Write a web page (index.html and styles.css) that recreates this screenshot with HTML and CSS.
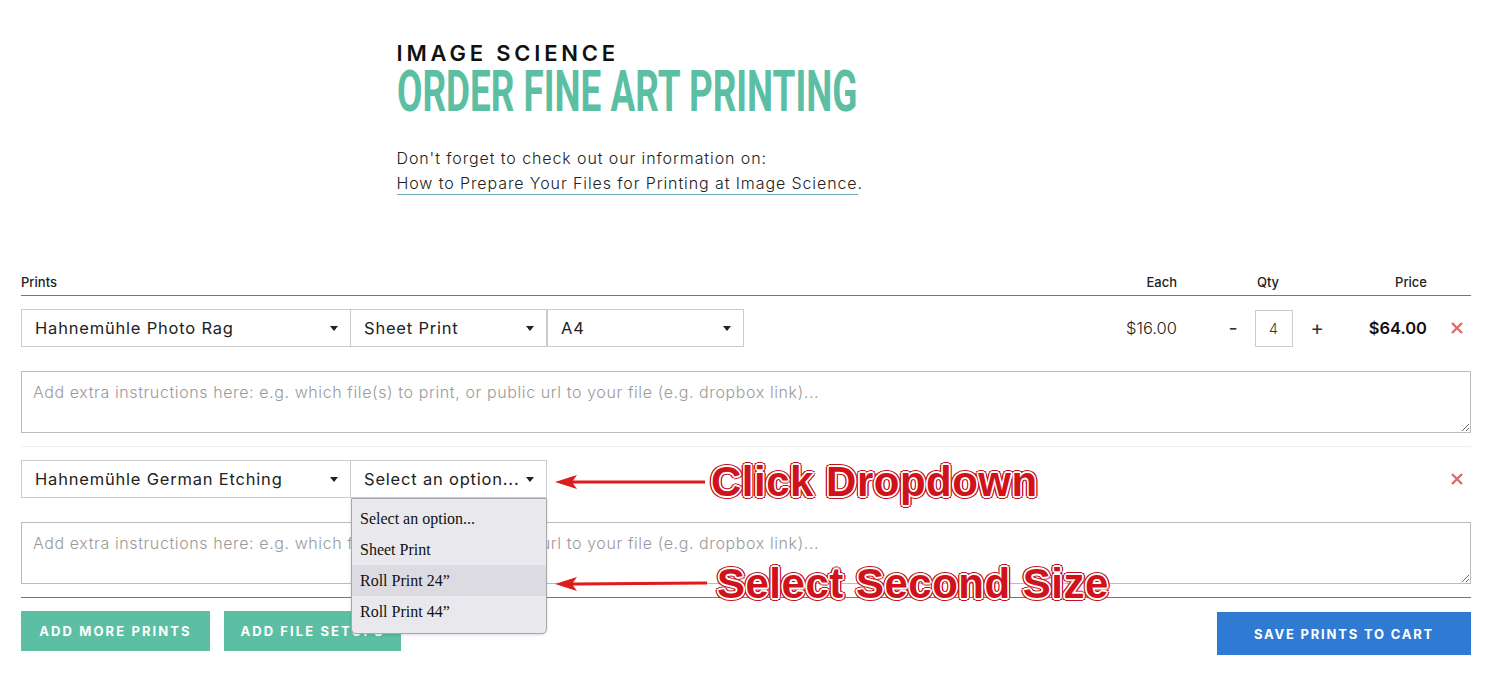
FILE: index.html
```html
<!DOCTYPE html>
<html lang="en">
<head>
<meta charset="utf-8">
<title>Order Fine Art Printing — Image Science</title>
<link rel="stylesheet" href="styles.css">
</head>
<body>
<header class="intro">
  <div class="brand">IMAGE SCIENCE</div>
  <h1 class="title"><span>ORDER FINE ART PRINTING</span></h1>
  <p class="note">Don't forget to check out our information on:<br>
    <a href="#" class="note-link">How to Prepare Your Files for Printing at Image Science</a>.</p>
</header>

<main class="order">
  <div class="grid head">
    <div>Prints</div>
    <div class="h-right">Each</div>
    <div class="h-qty">Qty</div>
    <div class="h-right">Price</div>
    <div></div>
  </div>

  <section class="item">
    <div class="grid">
      <div class="selects">
        <div class="select w-paper">Hahnemühle Photo Rag</div>
        <div class="select w-type">Sheet Print</div>
        <div class="select w-size">A4</div>
      </div>
      <div class="each">$16.00</div>
      <div class="qty">
        <span class="qty-btn">-</span>
        <span class="qty-box">4</span>
        <span class="qty-btn">+</span>
      </div>
      <div class="total">$64.00</div>
      <div class="col-remove">
        <svg class="remove" width="12" height="12" viewBox="0 0 12 12"><path d="M1 1 L11 11 M11 1 L1 11" stroke="#e06a6a" stroke-width="2.4" fill="none"/></svg>
      </div>
    </div>
    <textarea class="notes" placeholder="Add extra instructions here: e.g. which file(s) to print, or public url to your file (e.g. dropbox link)..."></textarea>
  </section>

  <section class="item last">
    <div class="grid">
      <div class="selects">
        <div class="select w-paper">Hahnemühle German Etching</div>
        <div class="select w-type open">Select an option...
          <ul class="menu">
            <li>Select an option...</li>
            <li>Sheet Print</li>
            <li class="hover">Roll Print 24”</li>
            <li>Roll Print 44”</li>
          </ul>
        </div>
      </div>
      <div></div>
      <div></div>
      <div></div>
      <div class="col-remove">
        <svg class="remove" width="12" height="12" viewBox="0 0 12 12"><path d="M1 1 L11 11 M11 1 L1 11" stroke="#e06a6a" stroke-width="2.4" fill="none"/></svg>
      </div>
    </div>
    <textarea class="notes" placeholder="Add extra instructions here: e.g. which file(s) to print, or public url to your file (e.g. dropbox link)..."></textarea>
  </section>

  <div class="actions">
    <div class="actions-left">
      <button class="btn teal btn-more">ADD MORE PRINTS</button>
      <button class="btn teal btn-setup">ADD FILE SETUPS</button>
    </div>
    <button class="btn blue btn-save">SAVE PRINTS TO CART</button>
  </div>

  <div class="callout callout-1">
    <svg class="arrow" width="150" height="20" viewBox="0 0 150 20"><path d="M0 10 L22 3 L18 8.5 L150 8.5 L150 11.5 L18 11.5 L22 17 Z" fill="#e01b1b"/></svg>
    <span class="callout-text">Click Dropdown</span>
  </div>
  <div class="callout callout-2">
    <svg class="arrow" width="152" height="20" viewBox="0 0 152 20"><path d="M0 10 L22 3 L18 8.5 L152 7.5 L152 10.5 L18 11.5 L22 17 Z" fill="#e01b1b"/></svg>
    <span class="callout-text">Select Second Size</span>
  </div>
</main>
</body>
</html>
```
FILE: styles.css
```css
* { box-sizing: border-box; }

body {
  margin: 0;
  background: #fff;
  color: #222;
  font-family: "Inter", "Liberation Sans", sans-serif;
}

/* heading block */
.intro {
  width: 700px;
  margin: 0 auto;
  padding-top: 40px;
}
.brand {
  font-weight: 600;
  font-size: 22px;
  letter-spacing: 3.8px;
  line-height: 26px;
  color: #111;
}
.title {
  margin: 2px 0 0;
  height: 48px;
  line-height: 48px;
  font-family: "Roboto", sans-serif;
  font-weight: 700;
  font-size: 57px;
  color: #5cbea3;
  white-space: nowrap;
}
.title span {
  display: inline-block;
  transform: scaleX(0.647);
  transform-origin: left center;
}
.note {
  margin: 30px 0 0;
  font-weight: 300;
  font-size: 16px;
  letter-spacing: 0.9px;
  line-height: 25px;
  color: #222;
}
.note-link {
  color: #222;
  text-decoration: none;
  border-bottom: 1px solid #6fa9bb;
  padding-bottom: 1px;
}

/* order table */
.order {
  position: relative;
  margin: 78px 22px 0 21px;
}
.grid {
  display: grid;
  grid-template-columns: 1fr 80px 190px 60px 44px;
  align-items: center;
}
.head {
  font-size: 13px;
  font-weight: 500;
  color: #222;
  padding-bottom: 5px;
  border-bottom: 1px solid #777;
}
.h-right { text-align: right; }
.h-qty { text-align: center; padding-right: 8px; }
.col-remove { padding-left: 16px; display: flex; justify-content: center; }

.item {
  padding: 13px 0;
  border-bottom: 1px solid #eee;
}
.item.last { border-bottom: 1px solid #777; }
.selects { display: flex; }
.select {
  position: relative;
  height: 38px;
  line-height: 36px;
  border: 1px solid #ccc;
  padding-left: 13px;
  font-size: 16.5px;
  font-weight: 400;
  letter-spacing: 0.8px;
  color: #222;
  white-space: nowrap;
}
.select + .select { margin-left: -1px; }
.select::after {
  content: "";
  position: absolute;
  right: 12px;
  top: 16px;
  border-left: 4.5px solid transparent;
  border-right: 4.5px solid transparent;
  border-top: 5px solid #222;
}
.w-paper { width: 330px; }
.w-type { width: 197px; }
.w-size { width: 197px; margin-left: 0 !important; }

.each {
  text-align: right;
  font-size: 16.5px;
  font-weight: 300;
  color: #222;
  white-space: nowrap;
}
.qty {
  display: flex;
  justify-content: center;
  align-items: center;
  gap: 18px;
  padding-left: 3px;
}
.qty-btn { font-size: 20px; font-weight: 400; color: #333; width: 8px; text-align: center; }
.qty-box {
  width: 38px;
  height: 37px;
  line-height: 35px;
  border: 1px solid #ccc;
  text-align: center;
  font-size: 14px;
  font-weight: 300;
  color: #333;
}
.total {
  text-align: right;
  font-size: 16.5px;
  font-weight: 600;
  color: #111;
  white-space: nowrap;
}
.remove { display: block; }

.notes {
  display: block;
  width: 100%;
  height: 62px;
  margin-top: 24px;
  border: 1px solid #bbb;
  padding: 10px 11px;
  font-family: "Inter", sans-serif;
  font-weight: 300;
  font-size: 16px;
  letter-spacing: 0.6px;
  color: #222;
  resize: vertical;
}
.notes::placeholder { color: #9a9a9a; }

/* native-style option list of the open select */
.menu {
  position: absolute;
  z-index: 3;
  left: 0;
  top: 37px;
  width: 196px;
  margin: 0;
  padding: 4px 0 6px;
  list-style: none;
  background: #e9e8ed;
  border: 1px solid #a8a8a8;
  border-radius: 0 0 5px 5px;
  box-shadow: 0 1px 3px rgba(0,0,0,0.15);
  font-family: "Liberation Serif", serif;
  font-size: 16px;
  letter-spacing: 0;
  line-height: 31px;
  color: #111;
}
.menu li { padding-left: 8px; }
.menu li.hover { background: #dcdbe1; }

/* bottom actions */
.actions {
  display: flex;
  justify-content: space-between;
  align-items: flex-start;
  padding-top: 13px;
}
.actions-left { display: flex; gap: 14px; }
.btn {
  border: 0;
  color: #fff;
  font-family: "Inter", sans-serif;
  font-weight: 700;
  font-size: 13px;
  letter-spacing: 2.1px;
  cursor: pointer;
}
.teal { background: #5cbea3; height: 40px; }
.blue { background: #2f7bd4; height: 43px; margin-top: 1px; letter-spacing: 1.8px; }
.btn-more { width: 189px; }
.btn-setup { width: 177px; }
.btn-save { width: 254px; }

/* annotation overlays */
.callout {
  position: absolute;
  display: flex;
  align-items: center;
  z-index: 4;
  pointer-events: none;
}
.callout-1 { left: 534px; top: 185px; }
.callout-2 { left: 534px; top: 287px; }
.arrow { display: block; }
.callout-text {
  margin-left: 6px;
  font-family: "Liberation Sans", sans-serif;
  font-weight: 700;
  font-size: 42px;
  letter-spacing: 0.5px;
  line-height: 46px;
  color: #d0121b;
  white-space: nowrap;
  text-shadow:
    1.6px 0 #fff, -1.6px 0 #fff, 0 1.6px #fff, 0 -1.6px #fff,
    1.2px 1.2px #fff, -1.2px 1.2px #fff, 1.2px -1.2px #fff, -1.2px -1.2px #fff,
    3px 0 #c4131b, -3px 0 #c4131b, 0 3px #c4131b, 0 -3px #c4131b,
    2.2px 2.2px #c4131b, -2.2px 2.2px #c4131b, 2.2px -2.2px #c4131b, -2.2px -2.2px #c4131b;
}
.callout-2 .callout-text { margin-left: 10px; }
```
